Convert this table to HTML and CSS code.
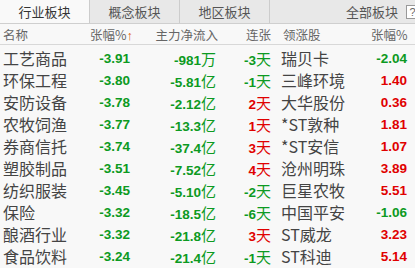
FILE: index.html
```html
<!DOCTYPE html>
<html lang="zh">
<head>
<meta charset="utf-8">
<link rel="stylesheet" href="styles.css">
</head>
<body>
<div class="panel">
  <div class="tabs">
    <div class="tab active">行业板块</div>
    <div class="tab">概念板块</div>
    <div class="tab">地区板块</div>
    <div class="tab-fill">全部板块 <span class="help">?</span></div>
  </div>
  <div class="row head">
    <div class="c-name">名称</div>
    <div class="c-pct">张幅%<span class="arrow">↑</span></div>
    <div class="c-flow">主力净流入</div>
    <div class="c-days">连张</div>
    <div class="c-lead">领涨股</div>
    <div class="c-pct2">张幅%</div>
  </div>
  <div class="body">
    <div class="row"><div class="c-name">工艺商品</div><div class="c-pct g">-3.91</div><div class="c-flow g">-981<span class="u">万</span></div><div class="c-days g">-3<span class="u">天</span></div><div class="c-lead">瑞贝卡</div><div class="c-pct2 g">-2.04</div></div>
    <div class="row"><div class="c-name">环保工程</div><div class="c-pct g">-3.80</div><div class="c-flow g">-5.81<span class="u">亿</span></div><div class="c-days g">-1<span class="u">天</span></div><div class="c-lead">三峰环境</div><div class="c-pct2 r">1.40</div></div>
    <div class="row"><div class="c-name">安防设备</div><div class="c-pct g">-3.78</div><div class="c-flow g">-2.12<span class="u">亿</span></div><div class="c-days r">2<span class="u">天</span></div><div class="c-lead">大华股份</div><div class="c-pct2 r">0.36</div></div>
    <div class="row"><div class="c-name">农牧饲渔</div><div class="c-pct g">-3.77</div><div class="c-flow g">-13.3<span class="u">亿</span></div><div class="c-days r">1<span class="u">天</span></div><div class="c-lead">*ST敦种</div><div class="c-pct2 r">1.81</div></div>
    <div class="row"><div class="c-name">券商信托</div><div class="c-pct g">-3.74</div><div class="c-flow g">-37.4<span class="u">亿</span></div><div class="c-days r">3<span class="u">天</span></div><div class="c-lead">*ST安信</div><div class="c-pct2 r">1.07</div></div>
    <div class="row"><div class="c-name">塑胶制品</div><div class="c-pct g">-3.51</div><div class="c-flow g">-7.52<span class="u">亿</span></div><div class="c-days r">4<span class="u">天</span></div><div class="c-lead">沧州明珠</div><div class="c-pct2 r">3.89</div></div>
    <div class="row"><div class="c-name">纺织服装</div><div class="c-pct g">-3.45</div><div class="c-flow g">-5.10<span class="u">亿</span></div><div class="c-days g">-2<span class="u">天</span></div><div class="c-lead">巨星农牧</div><div class="c-pct2 r">5.51</div></div>
    <div class="row"><div class="c-name">保险</div><div class="c-pct g">-3.32</div><div class="c-flow g">-18.5<span class="u">亿</span></div><div class="c-days g">-6<span class="u">天</span></div><div class="c-lead">中国平安</div><div class="c-pct2 g">-1.06</div></div>
    <div class="row"><div class="c-name">酿酒行业</div><div class="c-pct g">-3.32</div><div class="c-flow g">-21.8<span class="u">亿</span></div><div class="c-days r">3<span class="u">天</span></div><div class="c-lead">ST威龙</div><div class="c-pct2 r">3.23</div></div>
    <div class="row"><div class="c-name">食品饮料</div><div class="c-pct g">-3.24</div><div class="c-flow g">-21.4<span class="u">亿</span></div><div class="c-days g">-1<span class="u">天</span></div><div class="c-lead">ST科迪</div><div class="c-pct2 r">5.14</div></div>
  </div>
</div>
</body>
</html>
```
FILE: styles.css
```css
html, body {
  margin: 0;
  padding: 0;
  background: #f8f8f8;
}
.panel {
  width: 415px;
  height: 268px;
  overflow: hidden;
  background: #f8f8f8;
  font-family: "Noto Sans CJK SC", "Liberation Sans", sans-serif;
  color: #444;
}
.tabs {
  display: flex;
  height: 23px;
  background: #e8e8e8;
  border-bottom: 1px solid #cfcfcf;
}
.tab {
  width: 89px;
  border-right: 1px solid #cccccc;
  font-size: 13px;
  line-height: 23px;
  text-align: center;
  color: #555;
  background: #e8e8e8;
}
.tab.active {
  background: #f9f9f9;
  color: #333;
}
.tab-fill {
  flex: 1;
  display: flex;
  justify-content: flex-end;
  align-items: center;
  gap: 8px;
  font-size: 13px;
  color: #555;
  margin-right: -4px;
}
.help {
  display: inline-block;
  width: 11px;
  height: 12px;
  border: 1px solid #999;
  font-family: "Liberation Sans", sans-serif;
  font-size: 11px;
  line-height: 12px;
  text-align: center;
  color: #666;
  background: #fff;
}
.row {
  display: grid;
  grid-template-columns: 87px 40px 86px 55px 100px 36px;
  padding-left: 3px;
  height: 22px;
  align-items: center;
  white-space: nowrap;
}
.row.head {
  height: 20px;
  border-bottom: 1px solid #d8d8d8;
  font-size: 12.5px;
  color: #666;
}
.head .c-pct { margin-right: 2px; }
.head .c-flow { margin-right: -2px; }
.arrow {
  color: #e05a00;
  font-family: "Liberation Sans", sans-serif;
  font-weight: bold;
}
.body {
  padding-top: 1px;
}
.body .row {
  font-size: 16px;
}
.c-name { text-align: left; }
.c-pct, .c-flow, .c-days, .c-pct2 { text-align: right; }
.c-lead { padding-left: 10px; }
.head .c-lead { padding-left: 12px; }
.body .c-pct, .body .c-flow, .body .c-days, .body .c-pct2 {
  font-family: "Liberation Sans", sans-serif;
  font-weight: bold;
  font-size: 13.5px;
}
.u {
  font-family: "Noto Sans CJK SC", sans-serif;
  font-weight: normal;
  font-size: 15px;
}
.body .c-lead {
  color: #444;
}
.g { color: #0c9a22; }
.r { color: #e00000; }
```
